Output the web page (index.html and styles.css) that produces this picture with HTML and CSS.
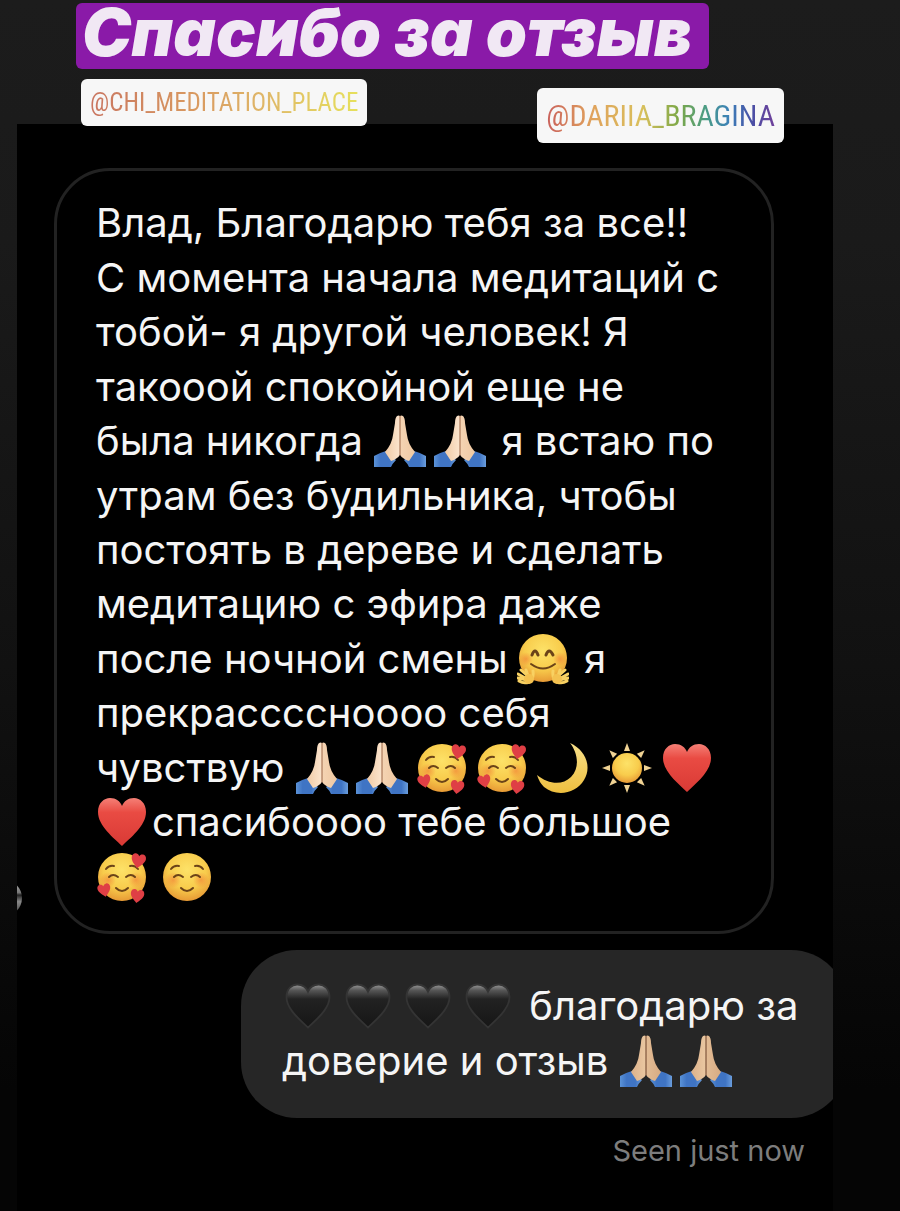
FILE: index.html
```html
<!DOCTYPE html>
<html lang="ru">
<head>
<meta charset="utf-8">
<meta name="viewport" content="width=device-width, initial-scale=1">
<title>Спасибо за отзыв</title>
<link rel="stylesheet" href="styles.css">
</head>
<body>
<svg class="defs" aria-hidden="true">
  <defs>
    <linearGradient id="skin" x1="0" x2="1"><stop offset="0" stop-color="#f0cba6"/><stop offset=".46" stop-color="#fbe3cb"/><stop offset=".5" stop-color="#a87656"/><stop offset=".54" stop-color="#f4d3b2"/><stop offset="1" stop-color="#efc9a3"/></linearGradient>
    <linearGradient id="tan" x1="0" x2="1"><stop offset="0" stop-color="#dcb18a"/><stop offset=".46" stop-color="#e9c6a0"/><stop offset=".5" stop-color="#7c5238"/><stop offset=".54" stop-color="#e2bb94"/><stop offset="1" stop-color="#d8ab82"/></linearGradient>
    <linearGradient id="cuff" x1="0" x2="1"><stop offset="0" stop-color="#5b93d8"/><stop offset=".3" stop-color="#3f74c4"/><stop offset=".7" stop-color="#3f74c4"/><stop offset="1" stop-color="#6a9ddc"/></linearGradient>
    <radialGradient id="face" cx=".5" cy=".35" r=".65"><stop offset="0" stop-color="#fde268"/><stop offset=".6" stop-color="#f8cc4c"/><stop offset="1" stop-color="#e79a35"/></radialGradient>
    <radialGradient id="blush"><stop offset="0" stop-color="#f07a35" stop-opacity=".6"/><stop offset="1" stop-color="#f07a35" stop-opacity="0"/></radialGradient>
    <linearGradient id="red" x2="0" y2="1"><stop offset="0" stop-color="#f58076"/><stop offset=".3" stop-color="#e94b43"/><stop offset="1" stop-color="#d93a35"/></linearGradient>
    <linearGradient id="black" x2="0" y2="1"><stop offset="0" stop-color="#999"/><stop offset=".14" stop-color="#555"/><stop offset=".34" stop-color="#222"/><stop offset="1" stop-color="#161616"/></linearGradient>
    <linearGradient id="gold" x2="0" y2="1"><stop offset="0" stop-color="#f8e08a"/><stop offset="1" stop-color="#eebf3f"/></linearGradient>
    <path id="heart-shape" d="M26 50C18 42 2 30 2 16C2 7 8 2 14 2C20 2 24 5 26 10C28 5 32 2 38 2C44 2 50 7 50 16C50 30 34 42 26 50Z"/>
    <g id="sleeves" fill="url(#cuff)"><path d="M0 52V41Q5 38 12 36L22 45Q18 49 17 52Z"/><path d="M52 52V41Q47 38 40 36L30 45Q34 49 35 52Z"/></g>
    <path id="palms" d="M23 1Q25 0 26 1Q27 0 29 1Q31 3 31 8L33 20Q34 29 41 37L35 46Q29 44 26 40Q23 44 17 46L11 37Q18 29 19 20L21 8Q21 3 23 1Z"/>
    <g id="smile-face">
      <circle cx="26" cy="26" r="24" fill="url(#face)"/>
      <circle cx="12" cy="29" r="8" fill="url(#blush)"/><circle cx="40" cy="29" r="8" fill="url(#blush)"/>
      <g fill="none" stroke="#6b4318" stroke-width="2" stroke-linecap="round"><path d="M10 18Q13 14 18 15"/><path d="M34 15Q39 14 42 18"/><path d="M13 26Q17 22 22 26"/><path d="M30 26Q35 22 39 26"/><path d="M20 37Q26 43 32 37"/></g>
    </g>
    <symbol id="pray" viewBox="0 0 52 52"><use href="#sleeves"/><use href="#palms" fill="url(#skin)"/></symbol>
    <symbol id="pray-tan" viewBox="0 0 52 52"><use href="#sleeves"/><use href="#palms" fill="url(#tan)"/></symbol>
    <symbol id="heart" viewBox="0 0 52 52"><use href="#heart-shape" fill="url(#red)"/></symbol>
    <symbol id="dark-heart" viewBox="-3 -3 58 58"><use href="#heart-shape" fill="url(#black)" stroke="#343434" stroke-width="2"/></symbol>
    <symbol id="smile" viewBox="0 0 52 52"><use href="#smile-face"/></symbol>
    <symbol id="love" viewBox="0 0 52 52">
      <use href="#smile-face"/>
      <g fill="#df3f45"><use href="#heart-shape" transform="translate(36 1) rotate(10) scale(.3)"/><use href="#heart-shape" transform="translate(0 34) rotate(-12) scale(.27)"/><use href="#heart-shape" transform="translate(35 37) rotate(8) scale(.28)"/></g>
    </symbol>
    <symbol id="hug" viewBox="0 0 52 52">
      <circle cx="26" cy="25" r="24" fill="url(#face)"/>
      <circle cx="9" cy="26" r="7" fill="url(#blush)"/><circle cx="43" cy="26" r="7" fill="url(#blush)"/>
      <g fill="none" stroke="#6b4318" stroke-width="3" stroke-linecap="round"><path d="M15 22Q18 14 21 22"/><path d="M29 22Q32 14 36 22"/><path d="M14 31Q26 40 38 31" stroke-width="2"/></g>
      <g id="hug-hand"><path d="M16 38Q17 46 12 49Q7 51 2 48M13 45L4 37M10 46L1 41M10 47L1 45M12 46L9 37" fill="none" stroke="#f8d162" stroke-width="3" stroke-linecap="round"/><circle cx="12" cy="46" r="5" fill="#f4c250"/></g>
      <use href="#hug-hand" transform="translate(52 0) scale(-1 1)"/>
    </symbol>
    <symbol id="moon" viewBox="0 0 52 52"><path d="M34 1C50 8 56 25 48 38C40 52 20 55 8 45Q3 40 1 33C12 42 26 44 35 35C44 26 42 11 34 1Z" fill="url(#gold)"/></symbol>
    <symbol id="sun" viewBox="0 0 52 52"><circle cx="26" cy="26" r="15" fill="url(#face)"/>
      <g fill="#f0d394"><g id="rays"><path d="M26 1L29 9H23Z"/><path d="M26 51L29 43H23Z"/><path d="M1 26L9 23V29Z"/><path d="M51 26L43 23V29Z"/></g><use href="#rays" transform="rotate(45 26 26)"/></g>
    </symbol>
  </defs>
</svg>
<main class="story">
  <header class="stickers">
    <h1 class="title">Спасибо за отзыв</h1>
    <div class="mentions">
      <a class="mention mention-warm" href="#chi"><span>@CHI_MEDITATION_PLACE</span></a>
      <a class="mention mention-rainbow" href="#dariia"><span>@DARIIA_BRAGINA</span></a>
    </div>
  </header>
  <section class="chat">
    <span class="avatar"></span>
    <p class="bubble received">
      <span>Влад, Благодарю тебя за все!!</span>
      <span>С момента начала медитаций с</span>
      <span>тобой- я другой человек! Я</span>
      <span>такооой спокойной еще не</span>
      <span>была никогда <svg class="emoji"><use href="#pray"/></svg><svg class="emoji"><use href="#pray"/></svg> я встаю по</span>
      <span>утрам без будильника, чтобы</span>
      <span>постоять в дереве и сделать</span>
      <span>медитацию с эфира даже</span>
      <span>после ночной смены<svg class="emoji spaced"><use href="#hug"/></svg> я</span>
      <span>прекрасссснoooo себя</span>
      <span>чувствую <svg class="emoji"><use href="#pray"/></svg><svg class="emoji"><use href="#pray"/></svg><svg class="emoji"><use href="#love"/></svg><svg class="emoji"><use href="#love"/></svg><svg class="emoji"><use href="#moon"/></svg><svg class="emoji spaced"><use href="#sun"/></svg><svg class="emoji"><use href="#heart"/></svg></span>
      <span><svg class="emoji"><use href="#heart"/></svg>спасибоооо тебе большое</span>
      <span><svg class="emoji"><use href="#love"/></svg><svg class="emoji spaced"><use href="#smile"/></svg></span>
    </p>
    <p class="bubble sent">
      <span><svg class="emoji"><use href="#dark-heart"/></svg><svg class="emoji"><use href="#dark-heart"/></svg><svg class="emoji"><use href="#dark-heart"/></svg><svg class="emoji"><use href="#dark-heart"/></svg> благодарю за</span>
      <span>доверие и отзыв <svg class="emoji"><use href="#pray-tan"/></svg><svg class="emoji"><use href="#pray-tan"/></svg></span>
    </p>
    <p class="status">Seen just now</p>
  </section>
</main>
</body>
</html>
```

FILE: styles.css
```css
* { box-sizing: border-box; }
body {
  margin: 0;
  background: #050505;
  font-family: Inter, "Liberation Sans", sans-serif;
}
.defs { position: absolute; width: 0; height: 0; }
.story {
  display: flex;
  flex-direction: column;
  min-height: 100vh;
  background: linear-gradient(#1c1c1c, #1a1a1a 20%, #111 55%, #050505 90%);
}
.stickers {
  position: relative;
  z-index: 1;
  height: 124px;
  padding: 3px 116px 0 76px;
}
.title {
  width: fit-content;
  margin: 0;
  padding: 0 16px 8px 6px;
  border-radius: 6px;
  background: #8a1aa8;
  color: #f1e8f4;
  font-size: 66px;
  font-style: italic;
  font-weight: 900;
  line-height: 58px;
  white-space: nowrap;
}
.mentions {
  display: flex;
  justify-content: space-between;
  align-items: flex-start;
  padding: 10px 0 0 5px;
}
.mention {
  padding: 0 9px;
  border-radius: 6px;
  background: #f7f7f7;
  font-family: "Roboto Condensed", "Open Sans Condensed", "Noto Sans Condensed", Roboto, sans-serif;
  text-decoration: none;
  white-space: nowrap;
}
.mention span { background-clip: text; color: transparent; }
.mention-warm { font-size: 25px; line-height: 47px; }
.mention-warm span { background-image: linear-gradient(90deg, #c97560, #d99a60 40%, #dfb768 65%, #e6e05c); }
.mention-rainbow { margin-top: 9px; font-size: 30px; line-height: 55px; }
.mention-rainbow span { background-image: linear-gradient(90deg, #c9605c, #e0a25c 20%, #d9c05c 42%, #7ca848 58%, #4a9c86 70%, #3c80b8 80%, #4a4fa5 90%, #70409a); }
.chat {
  position: relative;
  flex: 1;
  display: flex;
  flex-direction: column;
  align-items: flex-start;
  margin: 0 67px 0 17px;
  padding: 44px 0 40px 37px;
  overflow: hidden;
  background: #000;
}
.avatar {
  position: absolute;
  left: -31px;
  top: 756px;
  width: 36px;
  height: 36px;
  border-radius: 50%;
  background: linear-gradient(#bbb, #777 35%, #222 42%, #888 60%, #333);
}
.bubble {
  display: grid;
  grid-auto-rows: 1fr;
  margin: 0;
  color: #f5f5f5;
  font-size: 40px;
  line-height: 54px;
  white-space: nowrap;
}
.bubble > span { display: flex; align-items: center; white-space: pre; }
.received {
  width: 720px;
  min-height: 766px;
  padding: 25px 39px 27px;
  border: 3px solid #222;
  border-radius: 56px;
}
.sent {
  align-self: flex-end;
  width: 606px;
  min-height: 168px;
  margin: 16px -14px 0 0;
  padding: 28px 41px 30px;
  border-radius: 56px;
  background: #262626;
}
.emoji { flex: none; width: 52px; height: 52px; margin: 0 4px 0 0; }
.emoji + .emoji { margin-left: 4px; }
.emoji.spaced { margin-left: 9px; }
.status {
  align-self: flex-end;
  margin: 16px 28px 0 0;
  color: #7d7d7d;
  font-size: 29px;
  line-height: 34px;
}
```
